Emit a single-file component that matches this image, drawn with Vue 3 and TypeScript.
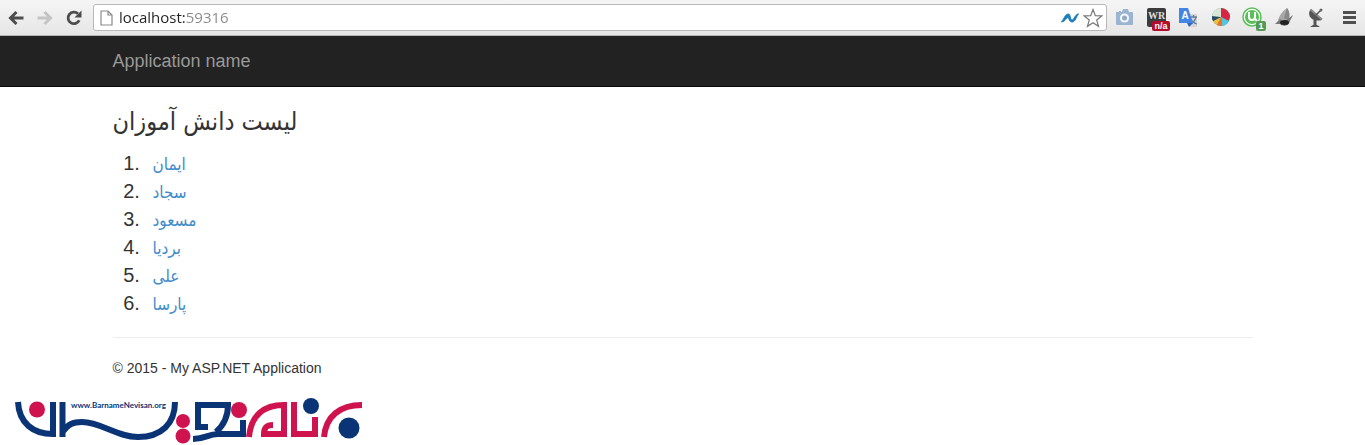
<script setup lang="ts">
import { ref } from 'vue'

interface Student {
  id: number
  name: string
}

const address = ref<string>('localhost:59316')

const students: Student[] = [
  { id: 1, name: 'ایمان' },
  { id: 2, name: 'سجاد' },
  { id: 3, name: 'مسعود' },
  { id: 4, name: 'بردیا' },
  { id: 5, name: 'علی' },
  { id: 6, name: 'پارسا' },
]
</script>

<template>
  <div class="browser">
    <header class="toolbar">
      <div class="history">
        <button type="button" aria-label="Back">
          <svg width="16" height="16" viewBox="0 0 16 16"><path d="M15.500 8H3M8.500 2L2.500 8L8.500 14" fill="none" stroke="#4c4c4c" stroke-width="3" /></svg>
        </button>
        <button type="button" aria-label="Forward" disabled>
          <svg width="16" height="16" viewBox="0 0 16 16"><path d="M0.500 8H13M7.500 2L13.500 8L7.500 14" fill="none" stroke="#c4c4c4" stroke-width="3" /></svg>
        </button>
        <button type="button" aria-label="Reload">
          <svg width="16" height="16" viewBox="0 0 16 16"><path d="M13.200 10.200A5.800 5.800 0 1 1 12 3.800" fill="none" stroke="#4c4c4c" stroke-width="2.800" /><path d="M15.500 0.500V7.500H8.500Z" fill="#4c4c4c" /></svg>
        </button>
      </div>

      <div class="omnibox">
        <svg width="13" height="16" viewBox="0 0 13 16"><path d="M1 1H8L12 5V15H1ZM8 1V5H12" fill="#fff" stroke="#8a8a8a" stroke-width="1.200" /></svg>
        <input v-model="address" class="address" type="text" aria-label="Address" spellcheck="false" />
        <button type="button" aria-label="Network tools">
          <svg width="18" height="10" viewBox="0 0 18 10"><path d="M0.500 9C3 6 4 1 7.500 1C9.500 1 9 7 11 7C13 7 13.500 2 17.500 0.800C15 4 14.500 9 11 9C8 9 8 4.500 6.800 4.500C5.500 4.500 4 9 0.500 9Z" fill="#1d7dba" stroke="#1d7dba" stroke-width="1" /></svg>
        </button>
        <button type="button" aria-label="Bookmark">
          <svg width="20" height="20" viewBox="0 0 20 20"><path d="M10 1.500L12.300 7.600L18.800 7.900L13.700 12L15.500 18.300L10 14.700L4.500 18.300L6.300 12L1.200 7.900L7.700 7.600Z" fill="#fff" stroke="#777" stroke-width="1.200" /></svg>
        </button>
      </div>

      <div class="extensions">
        <button type="button" aria-label="Screenshot">
          <svg width="26" height="26" viewBox="0 0 26 26"><path d="M4 7H7V6H9V7H10L11 4H16L17 7H20Q21 7 21 8V19Q21 20 20 20H5Q4 20 4 19Z" fill="#9bb5d0" /><circle cx="12.500" cy="13" r="4.600" fill="#f4f7fa" /><circle cx="12.500" cy="13" r="2.500" fill="#8fabc8" /></svg>
        </button>
        <button type="button" aria-label="WR rank">
          <svg width="26" height="26" viewBox="0 0 26 26"><rect x="3" y="3" width="19" height="19" rx="2" fill="#3c3c3c" /><text x="12.500" y="14" class="serif-mark" text-anchor="middle">WR</text><rect x="8" y="16" width="18" height="10" rx="2" fill="#b30d2c" /><text x="17" y="24" class="badge" text-anchor="middle">n/a</text></svg>
        </button>
        <button type="button" aria-label="Translate">
          <svg width="26" height="26" viewBox="0 0 26 26"><path d="M13 9H21V22H14L10 16Z" fill="#d5d5d5" /><path d="M14 12H21M17.500 10V12M20 12C19 16 17 18 14 19M15 14C16 17 18 18 21 19" fill="none" stroke="#687d96" stroke-width="1.300" /><path d="M3 3H12L17 18H3Z" fill="#4285e7" /><text x="9" y="14" class="letter" text-anchor="middle">A</text><path d="M11 18H17L13 22Z" fill="#3167be" /></svg>
        </button>
        <button type="button" aria-label="Colour wheel">
          <svg width="26" height="26" viewBox="0 0 26 26"><g transform="translate(0 1)"><circle cx="13" cy="11" r="9" fill="#4a8f80" /><path d="M13 11V2A9 9 0 0 1 22 11L20 15Z" fill="#d82642" /><path d="M13 11L21 15A9 9 0 0 1 14 20Z" fill="#54c6da" /><path d="M13 11L14 20A9 9 0 0 1 9 19Z" fill="#ee7031" /><path d="M13 11L9 19A9 9 0 0 1 5 15Z" fill="#f1be36" /><path d="M13 11L5 15A9 9 0 0 1 4 10Z" fill="#284963" /><path d="M13 11L4 10A9 9 0 0 1 13 2Z" fill="#d9e7d9" /></g></svg>
        </button>
        <button type="button" aria-label="Downloads, 1 active">
          <svg width="26" height="26" viewBox="0 0 26 26"><circle cx="12" cy="12" r="9" fill="#fff" stroke="#5abf58" stroke-width="1.500" /><circle cx="12" cy="12" r="7" fill="#5abf58" /><path d="M9 7V12Q9 15 12 15Q15 15 15 12V7M15 14L17 16" fill="none" stroke="#fff" stroke-width="2" /><rect x="16" y="16" width="10" height="10" rx="2" fill="#559a54" /><text x="21" y="24" class="badge" text-anchor="middle">1</text></svg>
        </button>
        <button type="button" aria-label="Rocket">
          <svg width="26" height="26" viewBox="0 0 26 26"><path d="M6 15C8 9 11 6 15 3C18 7 18 12 16 15Z" fill="#a8a8a8" /><path d="M12 13L15 3C18 7 18 12 16 15Z" fill="#888" /><path d="M3 19L8 14C11 17 14 16 17 13L21 10L18 16C17 21 11 22 8 19Z" fill="#777" /><ellipse cx="12.500" cy="17.500" rx="4.500" ry="2.500" fill="#222" /></svg>
        </button>
        <button type="button" aria-label="Satellite dish">
          <svg width="26" height="26" viewBox="0 0 26 26"><path d="M7 4C2 9 7 18 18 15Z" fill="#555" /><path d="M6.500 4.500L18 14.500" stroke="#8a8a8a" stroke-width="2" /><path d="M12 10L17 5" fill="none" stroke="#555" stroke-width="1.500" /><circle cx="17" cy="5" r="1.500" fill="#666" /><path d="M11 15V20" stroke="#555" stroke-width="3" /><path d="M6 22Q11 17 16 22Z" fill="#555" /></svg>
        </button>
        <button type="button" aria-label="Menu">
          <svg width="26" height="26" viewBox="0 0 26 26"><path d="M7 7.500H20M7 12.500H20M7 17.500H20" stroke="#505050" stroke-width="3" /></svg>
        </button>
      </div>
    </header>

    <nav class="navbar">
      <div class="container">
        <a class="brand" href="#">Application name</a>
      </div>
    </nav>

    <main class="container">
      <h2>لیست دانش آموزان</h2>
      <ol>
        <li v-for="student in students" :key="student.id">
          <a :href="`#student-${student.id}`">{{ student.name }}</a>
        </li>
      </ol>
      <hr />
      <footer>
        <p>© 2015 - My ASP.NET Application</p>
      </footer>
    </main>

    <svg class="logo" width="360" height="55" viewBox="10 390 360 55" role="img" aria-label="BarnameNevisan">
      <g fill="none" stroke="#0b3477" stroke-width="6">
        <path d="M18 402C19 423 33 434 53 434V402" />
        <path d="M62.500 402V437M62.500 432C68 424 73 422 82 422C101 422 117 437 138 437C161 437 175 424 175 402" />
        <path d="M208 427H198V405H228C228 417 224 425 216 432M193 439C205 439 208 434 218 434H243V420" />
      </g>
      <g fill="none" stroke="#cf134f" stroke-width="6">
        <path d="M249 437C251 415 264 405 284 405V434H264C264 427 267 425 273 425" />
        <path d="M294 402V434H315V417" />
        <path d="M324 437C326 416 340 405 362 405" />
      </g>
      <g fill="#cf134f">
        <circle cx="37" cy="409.500" r="8" />
        <circle cx="183" cy="421" r="7" />
        <circle cx="183" cy="436" r="7.500" />
        <circle cx="239" cy="410" r="8" />
      </g>
      <g fill="#0b3477">
        <circle cx="311" cy="406" r="8" />
        <circle cx="349" cy="428" r="10.500" />
        <text x="71" y="408" class="site">www.BarnameNevisan.org</text>
      </g>
    </svg>
  </div>
</template>

<style>
body {
  margin: 0;
  background: #fff;
}
</style>

<style scoped>
.browser {
  font-family: "Liberation Sans", "DejaVu Sans", sans-serif;
  font-size: 14px;
  line-height: 20px;
  color: #333;
}

button {
  display: flex;
  padding: 0;
  border: 0;
  background: none;
}

.toolbar {
  display: flex;
  align-items: center;
  box-sizing: border-box;
  height: 36px;
  padding: 0 3px 0 8px;
  border-bottom: 1px solid #b5b5b5;
  background: linear-gradient(#f5f5f5, #e6e6e6);
}

.history {
  display: flex;
  gap: 13px;
  margin-right: 11px;
}

.omnibox {
  display: flex;
  flex: 1;
  align-items: center;
  gap: 4px;
  box-sizing: border-box;
  height: 27px;
  padding: 0 3px 0 6px;
  border: 1px solid #b8b8b8;
  border-radius: 3px;
  background: #fff;
}

.address {
  flex: 1;
  min-width: 0;
  padding: 0 0 2px 2px;
  border: 0;
  outline: 0;
  font: 15px/20px "Open Sans", sans-serif;
  color: transparent;
  background: linear-gradient(90deg, #222 68px, #888 68px);
  background-clip: text;
}

.extensions {
  display: flex;
  gap: 6px;
  margin-left: 5px;
}

.serif-mark {
  font: bold 10px "Liberation Serif", serif;
  fill: #ddd;
}

.badge {
  font: bold 9px "Liberation Sans", sans-serif;
  fill: #fff;
}

.letter {
  font: bold 10px "Liberation Sans", sans-serif;
  fill: #fff;
}

.navbar {
  border-bottom: 1px solid #080808;
  background: #222;
}

.container {
  box-sizing: border-box;
  max-width: 1170px;
  margin: 0 auto;
  padding: 0 15px;
}

.brand {
  display: inline-block;
  padding: 15px 0;
  font-size: 18px;
  color: #999;
  text-decoration: none;
  vertical-align: top;
}

h2 {
  margin: 0;
  padding: 18px 0 11px;
  font-family: "DejaVu Sans Condensed", "DejaVu Sans", sans-serif;
  font-size: 25px;
  font-weight: 400;
  line-height: 33px;
}

ol {
  margin: 0;
  padding-left: 33px;
  font-size: 20px;
  line-height: 28px;
}

li {
  height: 28px;
}

li a {
  padding-left: 7px;
  font-family: "DejaVu Sans Condensed", "DejaVu Sans", sans-serif;
  font-size: 17px;
  color: #428bca;
  text-decoration: none;
}

hr {
  margin: 20px 0;
  border: 0;
  border-top: 1px solid #eee;
}

footer p {
  margin: 0 0 12px;
}

.logo {
  display: block;
  margin-left: 10px;
}

.site {
  font: bold 8px Lato, sans-serif;
}
</style>
